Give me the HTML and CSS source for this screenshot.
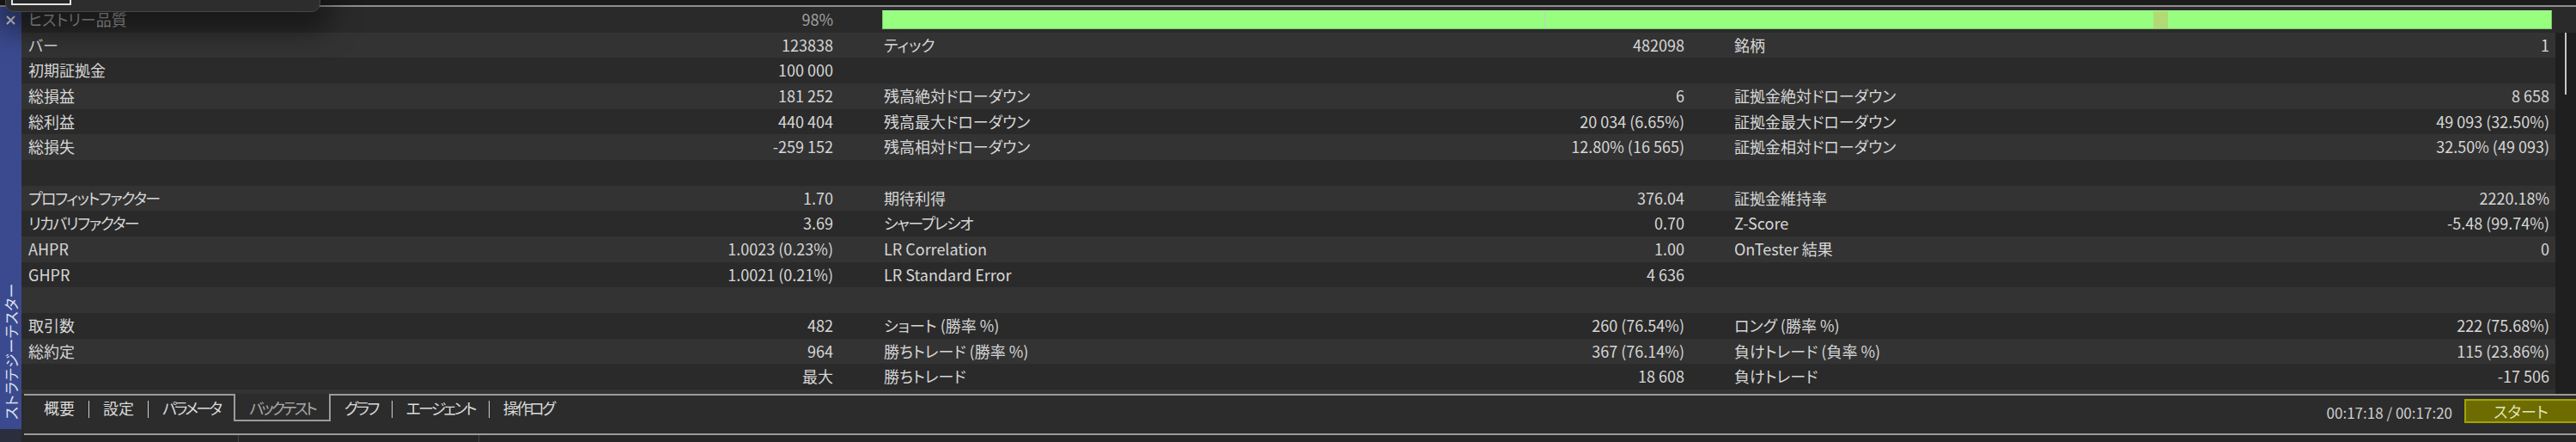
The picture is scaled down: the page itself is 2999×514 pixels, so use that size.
FILE: index.html
```html
<!DOCTYPE html>
<html lang="ja">
<head>
<meta charset="utf-8">
<title>ストラテジーテスター</title>
<link rel="stylesheet" href="styles.css">
</head>
<body>
<div class="app">
  <div class="topbar"></div>
  <div class="popup"><div class="popup-field"></div></div>
  <div class="body">
    <aside class="sidebar">
      <div class="side-blue">
        <svg class="close" width="11" height="11" viewBox="0 0 11 11"><path d="M1 1 L10 10 M10 1 L1 10" stroke="#dcdcdc" stroke-width="2" fill="none"/></svg>
        <span class="vlabel">ストラテジーテスター</span>
      </div>
      <div class="side-foot"></div>
    </aside>
    <main class="panel">
      <div class="row row-head">
        <div class="cell c1"><span>ヒストリー品質</span><span>98%</span></div>
        <div class="bar-cell">
          <div class="quality-bar">
            <div class="seg seg-a"></div>
            <div class="seg-line"></div>
            <div class="seg seg-b"></div>
            <div class="seg-olive"></div>
            <div class="seg seg-c"></div>
          </div>
        </div>
      </div>
      <div class="scrollarea">
        <div class="rows">
          <div class="row"><div class="cell c1"><span>バー</span><span>123838</span></div><div class="cell c2"><span>ティック</span><span>482098</span></div><div class="cell c3"><span>銘柄</span><span>1</span></div></div>
          <div class="row"><div class="cell c1"><span>初期証拠金</span><span>100 000</span></div><div class="cell c2"></div><div class="cell c3"></div></div>
          <div class="row"><div class="cell c1"><span>総損益</span><span>181 252</span></div><div class="cell c2"><span>残高絶対ドローダウン</span><span>6</span></div><div class="cell c3"><span>証拠金絶対ドローダウン</span><span>8 658</span></div></div>
          <div class="row"><div class="cell c1"><span>総利益</span><span>440 404</span></div><div class="cell c2"><span>残高最大ドローダウン</span><span>20 034 (6.65%)</span></div><div class="cell c3"><span>証拠金最大ドローダウン</span><span>49 093 (32.50%)</span></div></div>
          <div class="row"><div class="cell c1"><span>総損失</span><span>-259 152</span></div><div class="cell c2"><span>残高相対ドローダウン</span><span>12.80% (16 565)</span></div><div class="cell c3"><span>証拠金相対ドローダウン</span><span>32.50% (49 093)</span></div></div>
          <div class="row"><div class="cell c1"></div><div class="cell c2"></div><div class="cell c3"></div></div>
          <div class="row"><div class="cell c1"><span class="kana">プロフィットファクター</span><span>1.70</span></div><div class="cell c2"><span>期待利得</span><span>376.04</span></div><div class="cell c3"><span>証拠金維持率</span><span>2220.18%</span></div></div>
          <div class="row"><div class="cell c1"><span class="kana">リカバリファクター</span><span>3.69</span></div><div class="cell c2"><span class="kana">シャープレシオ</span><span>0.70</span></div><div class="cell c3"><span>Z-Score</span><span>-5.48 (99.74%)</span></div></div>
          <div class="row"><div class="cell c1"><span>AHPR</span><span>1.0023 (0.23%)</span></div><div class="cell c2"><span>LR Correlation</span><span>1.00</span></div><div class="cell c3"><span>OnTester 結果</span><span>0</span></div></div>
          <div class="row"><div class="cell c1"><span>GHPR</span><span>1.0021 (0.21%)</span></div><div class="cell c2"><span>LR Standard Error</span><span>4 636</span></div><div class="cell c3"></div></div>
          <div class="row"><div class="cell c1"></div><div class="cell c2"></div><div class="cell c3"></div></div>
          <div class="row"><div class="cell c1"><span>取引数</span><span>482</span></div><div class="cell c2"><span>ショート (勝率 %)</span><span>260 (76.54%)</span></div><div class="cell c3"><span>ロング (勝率 %)</span><span>222 (75.68%)</span></div></div>
          <div class="row"><div class="cell c1"><span>総約定</span><span>964</span></div><div class="cell c2"><span>勝ちトレード (勝率 %)</span><span>367 (76.14%)</span></div><div class="cell c3"><span>負けトレード (負率 %)</span><span>115 (23.86%)</span></div></div>
          <div class="row"><div class="cell c1"><span></span><span>最大</span></div><div class="cell c2"><span>勝ちトレード</span><span>18 608</span></div><div class="cell c3"><span>負けトレード</span><span>-17 506</span></div></div>
          <div class="row"><div class="cell c1"></div><div class="cell c2"></div><div class="cell c3"></div></div>
        </div>
        <div class="track"><div class="thumb"></div></div>
      </div>
      <div class="tabbar">
        <nav class="tabs">
          <span class="tab">概要</span><span class="sep"></span>
          <span class="tab">設定</span><span class="sep"></span>
          <span class="tab kana-tab">パラメータ</span>
          <span class="tab kana-tab active">バックテスト</span>
          <span class="tab kana-tab">グラフ</span><span class="sep"></span>
          <span class="tab kana-tab">エージェント</span><span class="sep"></span>
          <span class="tab kana-tab">操作ログ</span>
        </nav>
        <div class="status">
          <span class="time">00:17:18 / 00:17:20</span>
          <button class="start">スタート</button>
        </div>
      </div>
      <div class="strip">
        <div class="strip-cell s1"></div>
        <div class="strip-cell s2"></div>
        <div class="strip-cell s3"></div>
      </div>
    </main>
  </div>
</div>
</body>
</html>
```

FILE: styles.css
```css
* { box-sizing: border-box; margin: 0; padding: 0; }

html, body {
  width: 2999px;
  height: 514px;
  overflow: hidden;
  background: #2a2a2a;
}

body {
  font-family: "Noto Sans CJK JP", "Noto Sans", sans-serif;
  font-feature-settings: "palt";
  font-size: 18px;
  color: #d6d6d6;
}

.app {
  position: relative;
  display: flex;
  flex-direction: column;
  width: 2999px;
  height: 514px;
}

.topbar {
  height: 8px;
  flex: none;
  background: #1c1c1c;
  border-bottom: 2px solid #8e8e8e;
}

.popup {
  position: absolute;
  top: -2px;
  left: 6px;
  width: 367px;
  height: 16px;
  background: #2d2d2d;
  border: 1px solid #474747;
  border-radius: 0 0 10px 10px;
  box-shadow: 0 8px 34px 12px rgba(0, 0, 0, 0.5);
  z-index: 5;
}

.popup-field {
  position: absolute;
  left: 6px;
  top: -2px;
  width: 70px;
  height: 9px;
  border: 2px solid #e2e2e2;
  background: #262626;
}

.body {
  flex: 1;
  display: flex;
  min-height: 0;
}

.sidebar {
  width: 25px;
  flex: none;
  display: flex;
  flex-direction: column;
}

.side-blue {
  flex: 1;
  background: #3b4a8f;
  display: flex;
  flex-direction: column;
  align-items: center;
  justify-content: space-between;
  padding: 10px 0 11px;
}

.close { display: block; margin-left: -1px; }

.vlabel {
  writing-mode: vertical-rl;
  text-orientation: sideways;
  transform: rotate(180deg);
  font-size: 17px;
  line-height: 20px;
  color: #dfe2ee;
  letter-spacing: 0.5px;
}

.side-foot {
  height: 15px;
  background: #2b2e3c;
}

.panel {
  flex: 1;
  display: flex;
  flex-direction: column;
  min-width: 0;
}

.row {
  display: grid;
  grid-template-columns: 975px 995px 980px;
  height: 29.67px;
  line-height: 29.67px;
  white-space: nowrap;
}

.rows .row:nth-child(odd) { background: #333333; }
.rows .row:nth-child(even) { background: #2a2a2a; }

.row-head {
  grid-template-columns: 975px 1fr;
  background: #2a2a2a;
  flex: none;
}

.cell {
  display: flex;
  justify-content: space-between;
  overflow: hidden;
}

.kana { letter-spacing: -1.5px; }

.c1 { padding: 0 30px 0 8px; }
.c2 { padding: 0 34px 0 29px; }
.c3 { padding: 0 7px 0 24px; }

.row-head .c1 { color: #a0a0a0; }

.bar-cell {
  display: flex;
  padding: 4px 28px 0 27px;
}

.quality-bar {
  flex: 1;
  display: flex;
  height: 22px;
  background: #98fe80;
  border: 1px solid #7cc56c;
  border-top-color: #a8ff94;
}

.seg { background: #98fe80; }
.seg-a { width: 770px; }
.seg-line { width: 1px; background: #c9c9c9; }
.seg-b { width: 708px; }
.seg-olive { width: 17px; background: #b3d977; }
.seg-c { flex: 1; }

.scrollarea {
  flex: 1;
  display: flex;
  min-height: 0;
  overflow: hidden;
}

.rows {
  width: 2950px;
  flex: none;
}

.track {
  flex: 1;
  background: #1f1f1f;
  padding: 0 0 0 11px;
}

.thumb {
  width: 2px;
  height: 76px;
  margin-top: -4px;
  background: #c6c6c6;
}

.tabbar {
  height: 48px;
  flex: none;
  margin-left: 3px;
  display: flex;
  justify-content: space-between;
  background: #2c2c2c;
  border-top: 2px solid #9b9b9b;
  border-bottom: 2px solid #9b9b9b;
}

.tabs {
  display: flex;
  align-items: flex-start;
  padding-left: 7px;
}

.tab {
  height: 30px;
  line-height: 28px;
  padding: 0 16px;
  color: #dadada;
}

.kana-tab { letter-spacing: -2.8px; }

.sep {
  width: 1px;
  height: 20px;
  margin-top: 6px;
  background: #cfcfcf;
}

.tab.active {
  margin-top: -2px;
  height: 32px;
  padding: 2px 16px 0 16px;
  border: 2px solid #9b9b9b;
  border-top: none;
  background: #2c2c2c;
  color: #a9a9a9;
}

.status {
  display: flex;
  align-items: flex-start;
  gap: 14px;
}

.time {
  line-height: 40px;
  font-size: 17px;
  color: #cfcfcf;
}

.start {
  margin-top: 4px;
  width: 130px;
  height: 28px;
  font: inherit;
  font-size: 18px;
  line-height: 24px;
  color: #e4e4b8;
  background: #6c6c00;
  border: 2px solid #a3a300;
  border-right: none;
}

.strip {
  height: 8px;
  flex: none;
  display: flex;
  background: #262626;
}

.strip-cell { border-right: 1px solid #444; }
.s1 { width: 253px; }
.s2 { width: 280px; }
.s3 { flex: 1; border-right: none; }
```
